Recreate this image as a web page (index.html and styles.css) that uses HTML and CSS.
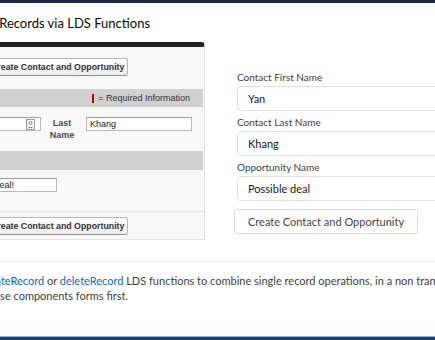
FILE: index.html
```html
<!DOCTYPE html>
<html lang="en">
<head>
  <meta charset="UTF-8" />
  <title>Create Records via LDS Functions</title>
  <link rel="stylesheet" href="styles.css">
</head>
<body>

<div class="topbar"></div>

<main class="page">
  <h1 class="title">Create Records via LDS Functions</h1>

  <div class="demo">
    <!-- classic visualforce style block -->
    <section class="classic">
      <div class="pb-buttons">
        <button class="btn-classic">Create Contact and Opportunity</button>
      </div>

      <div class="pb-head">
        <span class="req-mark"></span> = Required Information
      </div>
      <div class="pb-row">
        <div class="classic-input lookup">
          <svg class="lookup-icon" width="9" height="11" viewBox="0 0 9 11">
            <rect x="0.5" y="0.5" width="8" height="10" fill="#f4f4f4" stroke="#9a9a9a" />
            <circle cx="4.5" cy="4" r="1.5" fill="none" stroke="#8a8a8a" />
            <path d="M2.5 8.5h4" stroke="#8a8a8a" />
          </svg>
        </div>
        <label class="classic-label">Last Name</label>
        <div class="classic-input wide">Khang</div>
      </div>

      <div class="pb-head tall"></div>
      <div class="pb-row single">
        <div class="classic-input opp">Possible deal!</div>
      </div>

      <div class="pb-buttons bottom">
        <button class="btn-classic">Create Contact and Opportunity</button>
      </div>
    </section>

    <!-- lightning form -->
    <form class="lds">
      <div class="field">
        <label>Contact First Name</label>
        <div class="lds-input">Yan</div>
      </div>
      <div class="field">
        <label>Contact Last Name</label>
        <div class="lds-input">Khang</div>
      </div>
      <div class="field">
        <label>Opportunity Name</label>
        <div class="lds-input">Possible deal</div>
      </div>
      <button type="button" class="lds-btn">Create Contact and Opportunity</button>
    </form>
  </div>

  <p class="desc">
    Use <a href="#">createRecord</a>, <a href="#">updateRecord</a> or <a href="#">deleteRecord</a> LDS functions to combine single record operations, in a non transactional way.<br>
    Consider using the base components forms first.
  </p>
</main>

<div class="bottombar"></div>

</body>
</html>
```

FILE: styles.css
```css
body {
  margin: 0;
  width: 435px;
  height: 340px;
  overflow: hidden;
  background: #ffffff;
  display: flex;
  flex-direction: column;
  font-family: Lato, 'Open Sans', sans-serif;
  color: #3e3e3c;
}

.topbar {
  flex: none;
  height: 3px;
  background-color: #16294d;
}

.page {
  flex: 1;
}

.title {
  margin: 12px 0 0 -42px;
  font-size: 13px;
  font-weight: 400;
  line-height: 16px;
  color: #080707;
  white-space: nowrap;
}

.demo {
  display: flex;
  align-items: flex-start;
  margin-top: 11px;
}

/* classic block */
.classic {
  flex: none;
  width: 263px;
  height: 192px;
  margin-left: -60px;
  background-color: #f8f8f8;
  border: 1px solid #e3e3e3;
  border-top: 5px solid #222222;
  border-radius: 4px 4px 0 0;
  font-family: 'Liberation Sans', Arial, sans-serif;
  font-size: 9px;
  color: #333333;
}

.pb-buttons {
  padding: 11px 0 13px 46px;
}

.pb-buttons.bottom {
  padding: 5px 0 0 46px;
  border-top: 1px solid #e3e3e3;
}

.btn-classic {
  height: 18px;
  padding: 0 3px;
  font-family: 'Liberation Sans', Arial, sans-serif;
  font-size: 8.8px;
  font-weight: bold;
  color: #333333;
  background: linear-gradient(#ffffff, #ededed);
  border: 1px solid #b5b5b5;
  border-bottom-color: #8f8f8f;
  border-radius: 3px;
}

.pb-head {
  height: 18px;
  margin: 0 1px;
  display: flex;
  align-items: center;
  justify-content: flex-end;
  padding-right: 13px;
  background-color: #d1d1d1;
  color: #333333;
}

.pb-head.tall {
  height: 19px;
}

.req-mark {
  width: 2px;
  height: 9px;
  margin-right: 4px;
  background-color: #c00000;
}

.pb-row {
  display: flex;
  align-items: flex-start;
  padding: 10px 0;
}

.pb-row.single {
  padding: 8px 0 19px;
}

.classic-input {
  height: 14px;
  box-sizing: border-box;
  padding: 0 3px;
  display: flex;
  align-items: center;
  background: #ffffff;
  border: 1px solid #b9b9b9;
  border-top-color: #9c9c9c;
  font-size: 9px;
  color: #222222;
  white-space: nowrap;
  overflow: hidden;
}

.lookup {
  width: 81px;
  margin-left: 19px;
  justify-content: flex-end;
}

.lookup-icon {
  margin-right: 2px;
}

.classic-label {
  width: 32px;
  margin: 0 8px 0 5px;
  font-weight: bold;
  text-align: center;
  line-height: 12px;
  color: #4a4a56;
}

.wide {
  width: 106px;
}

.opp {
  width: 103px;
  margin-left: 13px;
}

/* lightning form */
.lds {
  flex: none;
  width: 260px;
  margin: 0;
  padding: 29px 0 0 32px;
}

.field {
  margin-bottom: 5px;
}

.field label {
  display: block;
  font-size: 10px;
  line-height: 13px;
  color: #3e3e3c;
}

.lds-input {
  height: 25px;
  margin-top: 2px;
  box-sizing: border-box;
  padding-left: 10px;
  display: flex;
  align-items: center;
  border: 1px solid #e0dfde;
  border-radius: 4px;
  font-size: 11px;
  color: #181818;
}

.lds-btn {
  height: 25px;
  margin: 3px 0 0 -3px;
  padding: 0 13px;
  font-family: Lato, 'Open Sans', sans-serif;
  font-size: 11px;
  color: #444444;
  background: #ffffff;
  border: 1px solid #dddbda;
  border-radius: 3px;
}

.desc {
  margin: 21px 0 0 -104px;
  padding-top: 11px;
  border-top: 1px solid #e5e5e5;
  font-size: 11px;
  line-height: 15px;
  text-indent: -9px;
  white-space: nowrap;
  color: #3e3e3c;
}

.desc a {
  color: #006dcc;
  text-decoration: none;
}

.bottombar {
  flex: none;
  height: 3px;
  border-top: 1px solid #8fb6df;
  background-color: #223a60;
}
```
